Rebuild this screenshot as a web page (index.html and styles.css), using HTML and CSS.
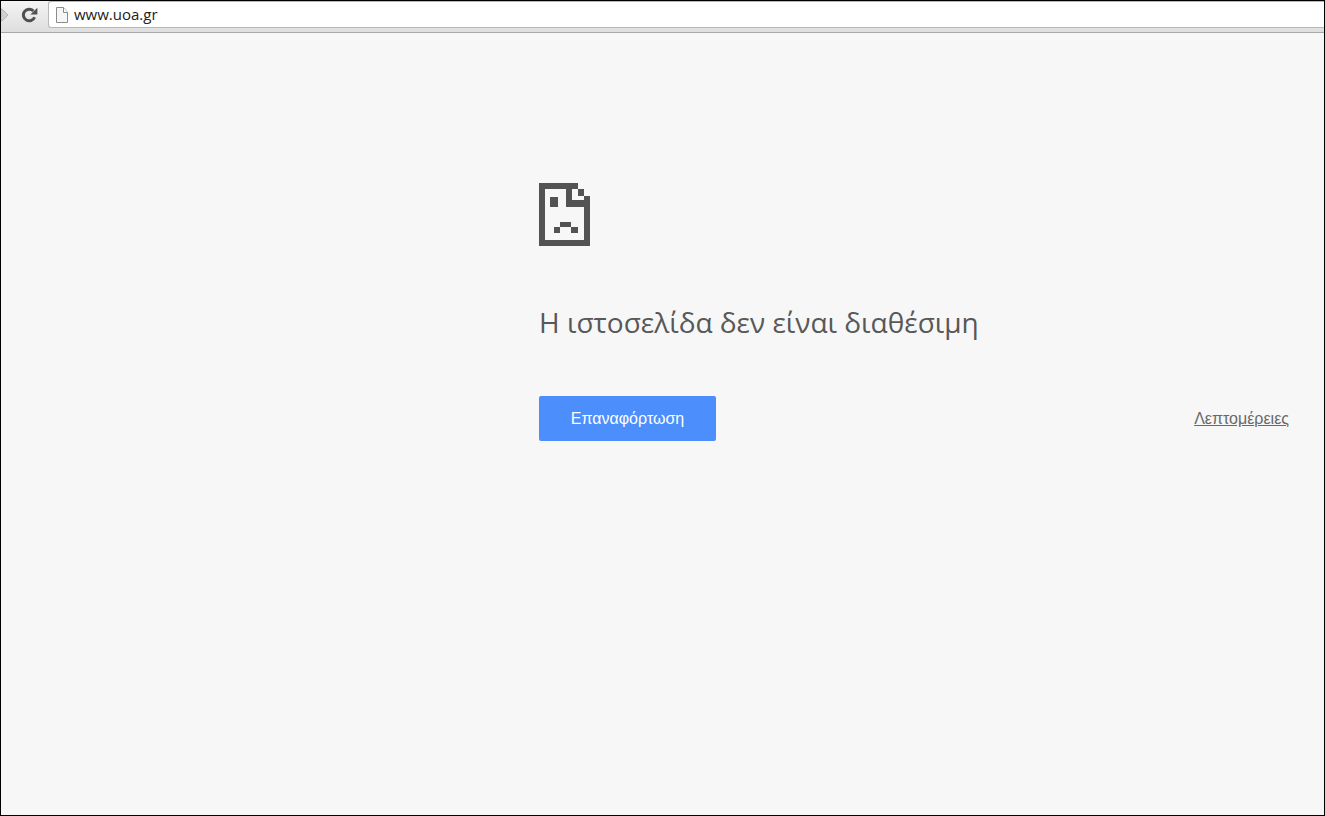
FILE: index.html
```html
<!DOCTYPE html>
<html lang="el">
<head>
  <meta charset="UTF-8">
  <meta name="viewport" content="width=device-width, initial-scale=1.0">
  <title>www.uoa.gr</title>
  <link rel="stylesheet" href="styles.css">
</head>
<body>

  <div class="toolbar">
    <button class="forward" type="button" aria-label="Εμπρός">
      <svg width="8" height="14" viewBox="0 0 8 14">
        <path d="M0 1 L1 1 L7 7 L1 13 L0 13 Z" fill="#cfcfcf" stroke="#b4b4b4"/>
      </svg>
    </button>
    <button class="reload" type="button" aria-label="Ανανέωση">
      <svg width="17" height="16" viewBox="0 0 17 16">
        <path d="M12.4 4 A5.8 5.8 0 1 0 13.6 10.2" fill="none" stroke="#505050" stroke-width="3"/>
        <path d="M16.4 0.8 V7.4 H9.4 Z" fill="#505050"/>
      </svg>
    </button>
    <div class="address">
      <svg width="12" height="16" viewBox="0 0 12 16">
        <path d="M0.5 0.5 H7.5 L11.5 5.5 V15.5 H0.5 Z" fill="#f6f6f6" stroke="#8c8c8c"/>
        <path d="M7.5 0.5 V5.5 H11.5" fill="#fff" stroke="#8c8c8c"/>
      </svg>
      <input type="text" value="www.uoa.gr" aria-label="Διεύθυνση">
    </div>
  </div>

  <main>
    <div class="error">
      <svg class="sad-page" width="51" height="63" viewBox="0 0 51 63" shape-rendering="crispEdges">
        <path d="M0 0 H39 V6 H45 V13 H51 V63 H0 Z" fill="#535353"/>
        <path d="M6 6 H27 V24 H45 V57 H6 Z M33 6 H39 V13 H45 V17 H33 Z" fill="#f7f7f7"/>
        <path d="M11 14 H19 V24 H11 Z M21 39 H32 V44 H39 V50 H32 V44 H21 V50 H15 V44 H21 Z" fill="#535353"/>
      </svg>
      <h1>Η ιστοσελίδα δεν είναι διαθέσιμη</h1>
      <div class="actions">
        <button class="primary" type="button">Επαναφόρτωση</button>
        <a href="#">Λεπτομέρειες</a>
      </div>
    </div>
  </main>

</body>
</html>
```

FILE: styles.css
```css
* {
  box-sizing: border-box;
}
body {
  margin: 0;
  min-height: 100vh;
  border: 1px solid #000;
  background: #f7f7f7;
  color: #585858;
  font-family: "Liberation Sans", Arial, sans-serif;
  font-size: 16px;
}
button {
  padding: 0;
  border: 0;
  background: none;
}
svg {
  display: block;
}
.toolbar {
  display: flex;
  align-items: center;
  height: 32px;
  padding-bottom: 4px;
  border-bottom: 1px solid #a8a8a8;
  background: linear-gradient(#f4f4f4, #dedede);
}
.reload {
  margin: 0 10px 0 12px;
}
.address {
  display: flex;
  flex: 1;
  align-items: center;
  gap: 6px;
  height: 27px;
  padding-left: 7px;
  border: 1px solid #b8b8b8;
  border-right: 0;
  border-radius: 3px 0 0 3px;
  background: #fff;
}
.address input {
  flex: 1;
  padding: 0 0 2px;
  border: 0;
  outline: 0;
  background: none;
  color: #222;
  font-family: "Open Sans", "Noto Sans", sans-serif;
  font-size: 15px;
}
main {
  display: flex;
  justify-content: flex-end;
  padding: 150px 35px 0;
}
.error {
  width: 100%;
  max-width: 750px;
}
h1 {
  margin: 55px 0 53px;
  font-family: "Open Sans", "Noto Sans", sans-serif;
  font-size: 28px;
  font-weight: 400;
  line-height: 42px;
}
.actions {
  display: flex;
  align-items: center;
  justify-content: space-between;
}
.primary {
  min-width: 177px;
  height: 45px;
  padding: 0 30px;
  border-radius: 2px;
  background: #4c8efb;
  color: #fff;
  font-family: inherit;
  font-size: 16px;
}
.actions a {
  color: #696969;
}
```
